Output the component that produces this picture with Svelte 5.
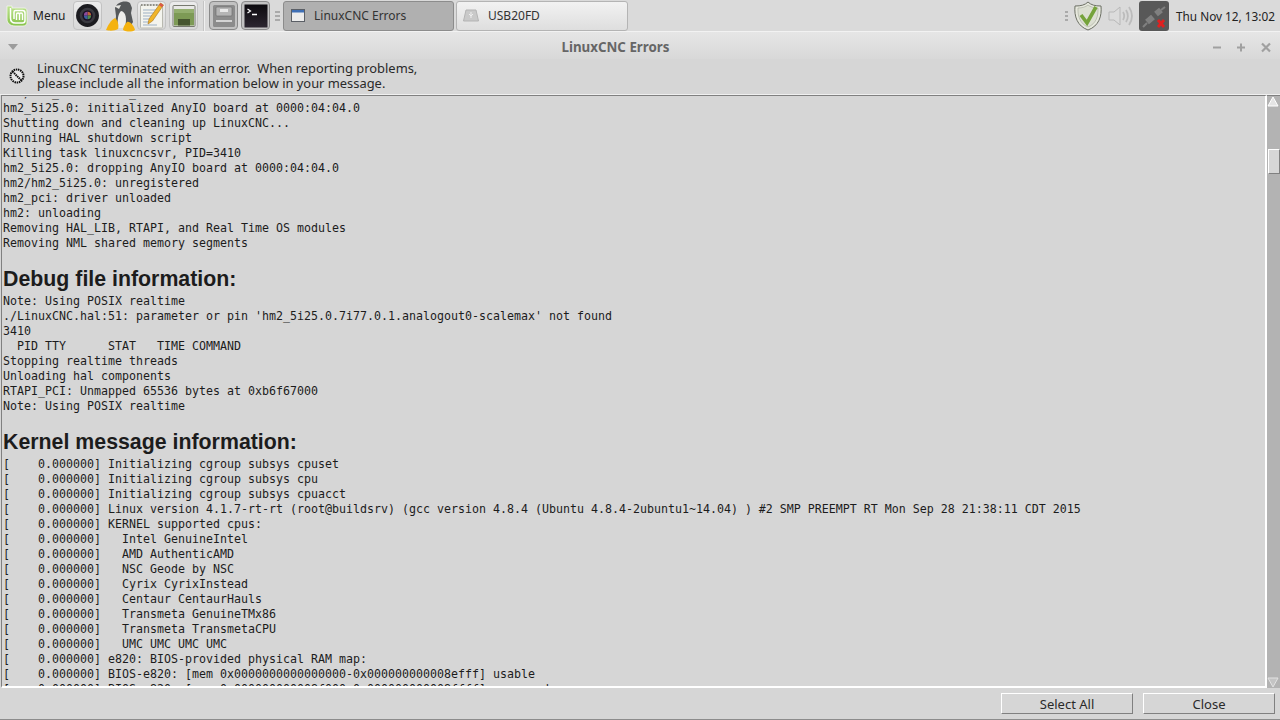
<script lang="ts">
  const logA = [
    'hm2/hm2_5i25.0: IO_Port',
    'hm2_5i25.0: initialized AnyIO board at 0000:04:04.0',
    'Shutting down and cleaning up LinuxCNC...',
    'Running HAL shutdown script',
    'Killing task linuxcncsvr, PID=3410',
    'hm2_5i25.0: dropping AnyIO board at 0000:04:04.0',
    'hm2/hm2_5i25.0: unregistered',
    'hm2_pci: driver unloaded',
    'hm2: unloading',
    'Removing HAL_LIB, RTAPI, and Real Time OS modules',
    'Removing NML shared memory segments',
  ];
  const logB = [
    'Note: Using POSIX realtime',
    "./LinuxCNC.hal:51: parameter or pin 'hm2_5i25.0.7i77.0.1.analogout0-scalemax' not found",
    '3410',
    '  PID TTY      STAT   TIME COMMAND',
    'Stopping realtime threads',
    'Unloading hal components',
    'RTAPI_PCI: Unmapped 65536 bytes at 0xb6f67000',
    'Note: Using POSIX realtime',
  ];
  const kernel = [
    'Initializing cgroup subsys cpuset',
    'Initializing cgroup subsys cpu',
    'Initializing cgroup subsys cpuacct',
    'Linux version 4.1.7-rt-rt (root@buildsrv) (gcc version 4.8.4 (Ubuntu 4.8.4-2ubuntu1~14.04) ) #2 SMP PREEMPT RT Mon Sep 28 21:38:11 CDT 2015',
    'KERNEL supported cpus:',
    '  Intel GenuineIntel',
    '  AMD AuthenticAMD',
    '  NSC Geode by NSC',
    '  Cyrix CyrixInstead',
    '  Centaur CentaurHauls',
    '  Transmeta GenuineTMx86',
    '  Transmeta TransmetaCPU',
    '  UMC UMC UMC UMC',
    'e820: BIOS-provided physical RAM map:',
    'BIOS-e820: [mem 0x0000000000000000-0x000000000008efff] usable',
    'BIOS-e820: [mem 0x000000000008f000-0x000000000008ffff] reserved',
  ];
  const stamped = (l: string) => '[    0.000000] ' + l;
</script>

<div class="screen">
  <header class="panel">
    <div class="menu">
      <svg width="22" height="22" viewBox="0 0 22 22">
        <defs>
          <linearGradient id="mint" x1="0" y1="0" x2="0" y2="1">
            <stop offset="0" stop-color="#bfe391" /><stop offset="1" stop-color="#86c24a" />
          </linearGradient>
        </defs>
        <path d="M1 1h5v2h12c2 0 3 1 3 3v11c0 2-1 4-4 4H9c-5 0-8-3-8-7z" fill="url(#mint)" stroke="#f4f8ec" stroke-width=".8" />
        <path d="M4.500 3v10c0 3 2 5 5 5h7c1.500 0 2.500-1 2.500-2.500V8c0-1.500-1-2.500-2.500-2.500H9.500C8.500 5.500 8 6 8 7v7" fill="none" stroke="#fff" stroke-width="1.500" />
        <path d="M10.500 15V9.500c0-2 3-2 3 0V15M13.500 9.500c0-2 3-2 3 0V15" fill="none" stroke="#fff" stroke-width="1.400" />
      </svg>
      <span>Menu</span>
    </div>

    <div class="launchers">
      <button class="launch" aria-label="Camera">
        <svg width="25" height="25" viewBox="0 0 24 24">
          <circle cx="12" cy="12" r="11" fill="#1c1c20" />
          <circle cx="12" cy="12" r="7.500" fill="#3a3a40" />
          <circle cx="12" cy="12" r="5" fill="#1a1224" />
          <path d="M12 8.500a3.500 3.500 0 0 1 3.500 3.500H12z" fill="#c0603a" />
          <path d="M15.500 12A3.500 3.500 0 0 1 12 15.500V12z" fill="#4f8c4a" />
          <path d="M12 15.500A3.500 3.500 0 0 1 8.500 12H12z" fill="#3b5fa0" />
          <path d="M8.500 12A3.500 3.500 0 0 1 12 8.500V12z" fill="#8b4a9c" />
        </svg>
      </button>
      <button class="launch bare" aria-label="Penguin">
        <svg width="30" height="32" viewBox="0 0 30 32">
          <path d="M10 8C12 2 20 0 25 3l2 5-1 5 2 9-3 5H10l1-11z" fill="#55585a" />
          <path d="M16 11c5 1 6 7 4 17h-7c-1-8 0-14 3-17z" fill="#ededeb" />
          <path d="M9 6l7-1-2 4z" fill="#e4e4e0" />
          <path d="M10 18c3 2 4 8 3 11-3 2-9 2-12 1 2-5 5-10 9-12z" fill="#f4b20f" />
          <path d="M22 22c3-1 7 4 8 8-3 2-8 2-12 0 0-3 2-6 4-8z" fill="#f4b20f" />
        </svg>
      </button>
      <button class="launch" aria-label="Text editor">
        <svg width="26" height="28" viewBox="0 0 26 28">
          <rect x="1.500" y="3" width="22" height="23" rx="1" fill="#f4f4ee" stroke="#b9b9b0" />
          <path d="M2 3h21" stroke="#8f8f88" stroke-width="2" stroke-dasharray="1.500 1.500" />
          <path d="M4 8h14M4 11h12M4 14h10M4 17h8M4 20h7M4 23h14" stroke="#9db0c4" stroke-width="1" />
          <path d="M21.500 1l3 2-11 16-4.500 3 1-5z" fill="#f0b52a" stroke="#a8741a" stroke-width=".6" />
          <path d="M21.500 1l3 2-1.500 2.200-3-2z" fill="#d9584a" />
        </svg>
      </button>
      <button class="launch" aria-label="Files">
        <svg width="24" height="24" viewBox="0 0 24 24">
          <rect x="1" y="1.500" width="22" height="21" rx="1" fill="#e8e8e6" stroke="#77796f" />
          <rect x="2" y="5" width="20" height="16.500" fill="#7d9a55" />
          <rect x="2" y="5" width="20" height="4" fill="#93ae6e" />
          <rect x="6" y="15" width="12" height="6.500" fill="#46552f" />
        </svg>
      </button>
      <div class="sep"></div>
      <button class="launch dark" aria-label="File manager">
        <svg width="24" height="24" viewBox="0 0 24 24">
          <rect x="1" y="1" width="22" height="22" rx="1.500" fill="#8c8c8c" />
          <rect x="4" y="3" width="16" height="9" rx="1" fill="#b5b5b5" stroke="#6a6a6a" stroke-width=".6" />
          <rect x="8" y="5" width="8" height="3" fill="#e8e8e8" />
          <rect x="4" y="16" width="16" height="2" fill="#d4d4d4" />
        </svg>
      </button>
      <button class="launch dark" aria-label="Terminal">
        <svg width="24" height="24" viewBox="0 0 24 24">
          <defs>
            <linearGradient id="term" x1="0" y1="0" x2="0" y2="1">
              <stop offset="0" stop-color="#0c0a0e" /><stop offset="1" stop-color="#2c2630" />
            </linearGradient>
          </defs>
          <rect x=".5" y=".5" width="23" height="23" fill="url(#term)" />
          <path d="M3.500 5l3 2-3 2" fill="none" stroke="#fff" stroke-width="1.200" />
          <path d="M8 10.500h5" stroke="#fff" stroke-width="1.300" />
        </svg>
      </button>
      <div class="grip"><i></i><i></i><i></i></div>
    </div>

    <div class="tasks">
      <div class="task active">
        <svg width="14" height="13" viewBox="0 0 14 13">
          <rect x=".5" y=".5" width="13" height="12" fill="#ececec" stroke="#5b5f66" />
          <rect x="1" y="1" width="12" height="2.500" fill="#3f6fb5" />
        </svg>
        <span>LinuxCNC Errors</span>
      </div>
      <div class="task">
        <svg width="16" height="13" viewBox="0 0 16 13">
          <path d="M3 1h10l2.500 11H.5z" fill="#c9c9c9" stroke="#b3b3b3" />
          <path d="M8 3v6M6 5l2 2 2-2" fill="none" stroke="#eeeeee" stroke-width="1" />
        </svg>
        <span>USB20FD</span>
      </div>
    </div>

    <div class="tray">
      <div class="grip small"><i></i><i></i><i></i></div>
      <svg width="28" height="30" viewBox="0 0 28 30">
        <path d="M14 1c3 3 7 4 13 4 1 10-2 20-13 24C3 25 0 15 1 5c6 0 10-1 13-4z" fill="#e6e8dd" stroke="#6c6f64" />
        <path d="M14 4c2.500 2 6 3 10 3 .5 8-2 16-10 19C6 23 3.500 15 4 7c4 0 7.500-1 10-3z" fill="#dcdfd2" stroke="#a6a99c" stroke-width=".6" />
        <path d="M7 14l6 8L22 6" fill="none" stroke="#75a33a" stroke-width="3.600" />
      </svg>
      <svg class="vol" width="26" height="22" viewBox="0 0 26 22">
        <path d="M1 7h5l6-5v18l-6-5H1z" fill="#dcdcdc" stroke="#b8b8b8" />
        <path d="M15 7c1.500 2.500 1.500 5.500 0 8M18 5c2.500 4 2.500 8 0 12M21 2c4 6 4 12 0 18" fill="none" stroke="#bcbcbc" stroke-width="1.800" />
      </svg>
      <div class="net">
        <svg width="28" height="30" viewBox="0 0 28 30">
          <path d="M7 21l6-5" stroke="#808080" stroke-width="6" />
          <path d="M3 26l4-4" stroke="#808080" stroke-width="2" />
          <path d="M16 13l5-4" stroke="#808080" stroke-width="6" />
          <path d="M21 9l4-3" stroke="#808080" stroke-width="2" />
          <path d="M18 19l6 7M24 19l-6 7" stroke="#e02020" stroke-width="2.800" />
        </svg>
      </div>
      <time>Thu Nov 12, 13:02</time>
    </div>
  </header>

  <div class="titlebar">
    <svg class="menu-arrow" width="10" height="6" viewBox="0 0 10 6"><path d="M0 0h10L5 6z" fill="#9c9c9c" /></svg>
    <h1>LinuxCNC Errors</h1>
    <div class="wm">
      <svg width="12" height="12" viewBox="0 0 12 12"><path d="M2 6.500h8" stroke="#a0a0a0" stroke-width="2" /></svg>
      <svg width="12" height="12" viewBox="0 0 12 12"><path d="M2 6.500h8M6 2.500v8" stroke="#a0a0a0" stroke-width="2" /></svg>
      <svg class="close" width="12" height="12" viewBox="0 0 12 12"><path d="M2 2.500l8 8M10 2.500l-8 8" stroke="#a0a0a0" stroke-width="2.200" /></svg>
    </div>
  </div>

  <div class="notice">
    <svg width="16" height="16" viewBox="0 0 16 16">
      <circle cx="8" cy="8" r="6.500" fill="#e8e8e8" stroke="#111" stroke-width="2" stroke-dasharray="1.500 .7" />
      <path d="M3.500 3.500l9 9" stroke="#111" stroke-width="2" stroke-dasharray="1.500 .7" />
    </svg>
    <p>LinuxCNC terminated with an error.  When reporting problems,<br />please include all the information below in your message.</p>
  </div>

  <div class="body">
    <div class="text">
      <div class="view">
        <div class="flow">
          {#each logA as line}<div class="line">{line}</div>{/each}
          <h2>Debug file information:</h2>
          {#each logB as line}<div class="line">{line}</div>{/each}
          <h2>Kernel message information:</h2>
          {#each kernel as line}<div class="line">{stamped(line)}</div>{/each}
        </div>
      </div>
    </div>
    <div class="scrollbar">
      <div class="arrow"><svg width="12" height="11" viewBox="0 0 12 11"><path d="M6 1l5 9H1z" fill="#e4e4e4" stroke="#fff" /></svg></div>
      <div class="thumb"></div>
      <div class="arrow down"><svg width="12" height="11" viewBox="0 0 12 11"><path d="M1 1h10L6 10z" fill="#c4c4c4" stroke="#e2e2e2" /></svg></div>
    </div>
  </div>

  <footer class="actions">
    <button class="tk">Select All</button>
    <button class="tk">Close</button>
  </footer>
</div>

<style>
  :global(body) {
    margin: 0;
    background: #d6d6d6;
  }
  .screen {
    width: 1280px;
    height: 720px;
    display: flex;
    flex-direction: column;
    overflow: hidden;
    background: #d6d6d6;
    color: #222;
    font-family: "Noto Sans", sans-serif;
  }

  /* ── Panel ───────────────────────────────────────────────────── */
  .panel {
    height: 32px;
    flex-shrink: 0;
    display: flex;
    align-items: center;
    background: #dadada;
    border-bottom: 1px solid #f2f2f2;
    box-sizing: border-box;
    font-size: 12px;
  }
  .menu {
    width: 73px;
    flex-shrink: 0;
    display: flex;
    align-items: center;
    gap: 5px;
    padding-left: 6px;
    box-sizing: border-box;
  }
  .launchers {
    display: flex;
    align-items: center;
    gap: 3px;
    width: 210px;
    flex-shrink: 0;
  }
  .launch {
    width: 29px;
    height: 29px;
    padding: 0;
    flex-shrink: 0;
    display: flex;
    align-items: center;
    justify-content: center;
    border: 1px solid #c2c2c2;
    border-radius: 4px;
    background: linear-gradient(#ececec, #d8d8d8);
    overflow: hidden;
  }
  .launch svg {
    flex-shrink: 0;
  }
  .launch.bare {
    border-color: transparent;
    background: none;
    overflow: visible;
  }
  .launch.dark {
    border-color: #8a8a8a;
    background: #c2c2c2;
  }
  .sep {
    width: 1px;
    height: 30px;
    margin: 0 1px 0 2px;
    background: #f0f0f0;
    border-left: 1px solid #c4c4c4;
  }
  .grip {
    display: flex;
    flex-direction: column;
    gap: 2px;
    margin-left: 2px;
  }
  .grip i {
    display: block;
    width: 5px;
    height: 2px;
    background: #aaa;
  }
  .grip.small i {
    width: 3px;
  }
  .tasks {
    display: flex;
    gap: 2px;
  }
  .task {
    width: 172px;
    height: 30px;
    display: flex;
    align-items: center;
    gap: 9px;
    padding-left: 6px;
    box-sizing: border-box;
    border: 1px solid #b4b4b4;
    border-radius: 3px;
    background: linear-gradient(#f2f2f2, #dedede);
    color: #333;
  }
  .task.active {
    width: 171px;
    padding-left: 7px;
    background: #b0b0b0;
    border-color: #8c8c8c;
  }
  .tray {
    margin-left: auto;
    display: flex;
    align-items: center;
    padding-right: 5px;
  }
  .tray .grip {
    margin-right: 6px;
  }
  .vol {
    margin: 0 5px 0 6px;
  }
  .net {
    width: 30px;
    height: 30px;
    display: flex;
    align-items: center;
    justify-content: center;
    background: #585858;
    border-radius: 3px;
    margin-right: 7px;
  }
  time {
    font-size: 11.8px;
    color: #222;
  }

  /* ── Window header ───────────────────────────────────────────── */
  .titlebar {
    height: 27px;
    flex-shrink: 0;
    display: flex;
    align-items: center;
    justify-content: center;
    position: relative;
    padding: 3px 49px 0 0;
    box-sizing: border-box;
    background: linear-gradient(#e6e6e6, #d8d8d8);
  }
  .menu-arrow {
    position: absolute;
    left: 8px;
    top: 12px;
  }
  h1 {
    margin: 0;
    font-size: 13.33px;
    font-weight: 700;
    color: #666;
  }
  .wm {
    position: absolute;
    right: 8px;
    top: 9px;
    display: flex;
    gap: 12px;
  }
  .wm .close {
    margin-left: 1px;
  }
  .notice {
    height: 35px;
    flex-shrink: 0;
    display: flex;
    align-items: center;
    gap: 12px;
    padding: 0 0 2px 9px;
    box-sizing: border-box;
  }
  .notice p {
    margin: 0;
    font-size: 12.9px;
    line-height: 15px;
    white-space: pre-wrap;
    color: #2a2a2a;
  }

  /* ── Log view ────────────────────────────────────────────────── */
  .body {
    flex: 1;
    min-height: 0;
    display: flex;
    padding-left: 1px;
    border-top: 1px solid #f0f0f0;
  }
  .text {
    flex: 1;
    min-width: 0;
    display: flex;
    flex-direction: column;
    border-style: solid;
    border-color: #808080 #fff #fff #808080;
    border-width: 1px 2px 2px 1px;
  }
  .view {
    flex: 1;
    min-height: 0;
    margin-top: 1px;
    overflow: hidden;
  }
  .flow {
    margin-top: -11px;
    padding-left: 1px;
  }
  .line {
    height: 15px;
    line-height: 15px;
    font-family: "DejaVu Sans Mono", monospace;
    font-size: 11.645px;
    white-space: pre;
    color: #1c1c1c;
  }
  h2 {
    margin: 14px 0 0;
    height: 29px;
    line-height: 29px;
    font-family: "Liberation Sans", sans-serif;
    font-size: 21.33px;
    font-weight: 700;
    color: #1c1c1c;
  }
  .scrollbar {
    width: 13px;
    flex-shrink: 0;
    display: flex;
    flex-direction: column;
    background: #b3b3b3;
    border-top: 1px solid #808080;
    box-sizing: border-box;
  }
  .arrow {
    height: 11px;
    display: flex;
  }
  .arrow.down {
    margin-top: auto;
  }
  .thumb {
    height: 25px;
    margin: 42px 0 0 1px;
    background: #d6d6d6;
    border: 1px solid;
    border-color: #fff #808080 #808080 #fff;
    box-sizing: border-box;
  }

  /* ── Buttons ─────────────────────────────────────────────────── */
  .actions {
    height: 32px;
    flex-shrink: 0;
    display: flex;
    justify-content: flex-end;
    gap: 10px;
    padding: 5px 5px 0 0;
    box-sizing: border-box;
    border-bottom: 1px solid #8c8c8c;
  }
  .tk {
    width: 132px;
    height: 21px;
    padding: 0;
    background: #d6d6d6;
    border: 1px solid;
    border-color: #fff #808080 #808080 #fff;
    font-family: "Noto Sans", sans-serif;
    font-size: 13px;
    color: #2a2a2a;
  }
</style>
